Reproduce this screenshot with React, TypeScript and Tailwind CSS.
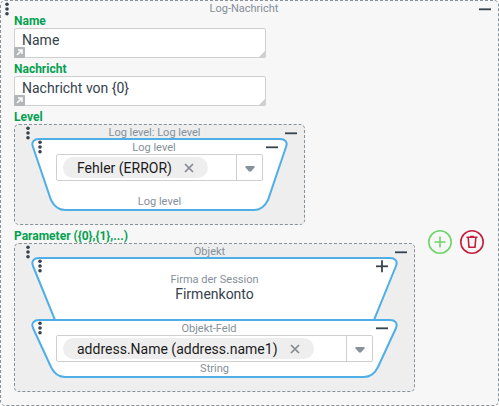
import { useRef, useState } from 'react';
import type { ReactNode } from 'react';

function Dots() {
  return (
    <svg width="4" height="14" viewBox="0 0 4 14" className="shrink-0 fill-[#36424c]" aria-hidden="true">
      <circle cx="2" cy="2.3" r="1.8" />
      <circle cx="2" cy="7" r="1.8" />
      <circle cx="2" cy="11.7" r="1.8" />
    </svg>
  );
}

function ToggleButton({ collapsed = false, wide = false }: { collapsed?: boolean; wide?: boolean }) {
  return (
    <button
      type="button"
      aria-label={collapsed ? 'Aufklappen' : 'Zuklappen'}
      className={wide ? 'flex w-[18px] shrink-0 justify-end' : 'flex w-3 shrink-0 justify-end'}
    >
      <svg width="12" height="14" viewBox="0 0 12 14" className="stroke-[#36424c]" strokeWidth="1.8">
        <path d="M0 7.3H12" />
        {collapsed && <path d="M6 1.3V13.3" />}
      </svg>
    </button>
  );
}

function Caption({ children }: { children?: ReactNode }) {
  return <span className="h-[14px] flex-1 text-center text-[11px] leading-4 text-[#84909a]">{children}</span>;
}

function TextField({ id, label, value }: { id: string; label: string; value: string }) {
  const [text, setText] = useState(value);

  return (
    <div className="mb-[2px] w-[252px]">
      <label htmlFor={id} className="block h-4 text-xs leading-[18px] font-bold text-[#04a150]">
        {label}
      </label>
      <div className="relative">
        <textarea
          id={id}
          rows={1}
          value={text}
          onChange={(e) => setText(e.target.value)}
          className="block h-[30px] w-full resize-none overflow-hidden rounded-xs border border-[#cfcfcf] bg-white px-[7px] py-px text-sm leading-5 text-[#36424c] outline-none"
        />
        <svg width="11" height="11" viewBox="0 0 11 11" className="absolute bottom-0 left-0" aria-hidden="true">
          <rect width="11" height="11" rx="1" fill="#b3b6b8" />
          <path d="M3 8L7.5 3.5M4 3H8V7" fill="none" stroke="#fff" strokeWidth="1.5" />
        </svg>
        <svg width="8" height="8" viewBox="0 0 8 8" className="absolute right-0 bottom-0" aria-hidden="true">
          <path d="M8 0V6Q8 8 6 8H0Z" fill="#cfcfcf" />
        </svg>
      </div>
    </div>
  );
}

// Dashed container that holds the blocks of one parameter
function Panel({ label, title, children }: { label: string; title: string; children: ReactNode }) {
  return (
    <section className="w-fit">
      <h3 className="h-4 text-xs leading-[18px] font-bold text-[#04a150]">{label}</h3>
      <div className="rounded-[5px] border border-dashed border-[#87929a] bg-[#eeeeee] pb-[13px]">
        <header className="flex h-[13px] items-start pr-[7px] pl-[11px]">
          <div className="mt-px">
            <Dots />
          </div>
          <Caption>{title}</Caption>
          <div className="mt-px">
            <ToggleButton wide />
          </div>
        </header>
        <div className="px-4">{children}</div>
      </div>
    </section>
  );
}

type BlockProps = {
  width: number;
  height: number;
  open?: boolean;
  title?: string;
  collapsed?: boolean;
  children: ReactNode;
};

// Trapezoid block; an open one runs into the block below it
function Block({ width: w, height: h, open = false, title, collapsed, children }: BlockProps) {
  const topRight = `H${w - 8} C${w - 3} 1 ${w} 4 ${w - 2} 9`;
  const d = open
    ? `M24 ${h + 1} L2 9 C0 4 3 1 8 1 ${topRight} L${w - 24} ${h + 1}`
    : `M8 1 ${topRight} L${w - 20} ${h - 11} Q${w - 25} ${h - 1} ${w - 34} ${h - 1} H34 Q25 ${h - 1} 20 ${h - 11} L2 9 C0 4 3 1 8 1 Z`;

  return (
    <div className="relative">
      <svg width={w} height={h} viewBox={`0 0 ${w} ${h}`} className="absolute inset-0" aria-hidden="true">
        <path d={d} fill="#fff" stroke="#50aee6" strokeWidth="2" />
      </svg>
      <div className="relative">
        <div className="flex items-start pt-[2px] pr-[10px] pl-[7px]">
          <Dots />
          <Caption>{title}</Caption>
          <ToggleButton collapsed={collapsed} />
        </div>
        {children}
      </div>
    </div>
  );
}

function ChipSelect({ label, value }: { label: string; value: string }) {
  const ref = useRef<HTMLSelectElement>(null);

  return (
    <div className="mx-[25px] flex h-[27px] rounded-xs border border-[#cfcfcf] bg-white">
      <div className="flex flex-1 items-center pl-[6px]">
        <div className="flex h-[21px] items-center rounded-full bg-[#eeeeee] px-[14px]">
          <select
            ref={ref}
            aria-label={label}
            defaultValue={value}
            className="field-sizing-content appearance-none bg-transparent text-sm leading-5 text-[#1c1c1c] outline-none"
          >
            <option>{value}</option>
          </select>
          <button type="button" aria-label="Entfernen" className="ml-3">
            <svg width="10" height="10" viewBox="0 0 10 10" className="stroke-[#84898d]" strokeWidth="1.7">
              <path d="M1 1L9 9M9 1L1 9" />
            </svg>
          </button>
        </div>
      </div>
      <button
        type="button"
        aria-label="Auswahl öffnen"
        onClick={() => ref.current?.showPicker()}
        className="flex w-[26px] items-center justify-center border-l border-[#cfcfcf]"
      >
        <svg width="10" height="6" viewBox="0 0 10 6" className="mt-[3px] fill-[#87929a]">
          <path d="M0.5 0H9.5V1.5L6 5.5H4L0.5 1.5Z" />
        </svg>
      </button>
    </div>
  );
}

export default function App() {
  return (
    <main className="rounded-[5px] border border-dashed border-[#87929a] bg-[#f7f7f7] pb-[13px] font-[Roboto,sans-serif]">
      <header className="flex h-[11px] items-start pr-[7px] pl-[4px]">
        <div className="mt-px">
          <Dots />
        </div>
        <Caption>Log-Nachricht</Caption>
        <div className="mt-px">
          <ToggleButton />
        </div>
      </header>

      <div className="pl-[13px]">
        <TextField id="name" label="Name" value="Name" />
        <TextField id="message" label="Nachricht" value="Nachricht von {0}" />

        <div className="mb-[2px]">
          <Panel label="Level" title="Log level: Log level">
            <Block width={257} height={73} title="Log level">
              <div className="w-[257px]">
                <ChipSelect label="Log level" value="Fehler (ERROR)" />
              </div>
              <p className="mt-[14px] mb-1 h-3 text-center text-[11px] leading-[14px] text-[#84909a]">Log level</p>
            </Block>
          </Panel>
        </div>

        <div className="flex items-start">
          <Panel label="Parameter ({0},{1},...)" title="Objekt">
            <Block width={367} height={62} open collapsed>
              <p className="h-3 text-center text-[11px] leading-[14px] text-[#84909a]">Firma der Session</p>
              <p className="pb-4 text-center text-sm leading-[18px] text-[#36424c]">Firmenkonto</p>
            </Block>
            <Block width={367} height={59} title="Objekt-Feld">
              <div className="w-[367px]">
                <ChipSelect label="Objekt-Feld" value="address.Name (address.name1)" />
              </div>
              <p className="h-4 text-center text-[11px] leading-[14px] text-[#84909a]">String</p>
            </Block>
          </Panel>

          <div className="mt-[3px] ml-[13px] flex gap-2">
            <button type="button" aria-label="Hinzufügen">
              <svg width="24" height="24" viewBox="0 0 24 24" fill="none" stroke="#6fd46a" strokeWidth="1.6">
                <circle cx="12" cy="12" r="11.2" />
                <path d="M12 6.5V17.5M6.5 12H17.5" />
              </svg>
            </button>
            <button type="button" aria-label="Löschen">
              <svg width="24" height="24" viewBox="0 0 24 24" fill="none" stroke="#c4203f" strokeWidth="1.6">
                <circle cx="12" cy="12" r="11.2" />
                <path d="M6.5 7.2H17.5M10 6.6H14M8.2 7.5L9 17.3H15L15.8 7.5" />
              </svg>
            </button>
          </div>
        </div>
      </div>
    </main>
  );
}
